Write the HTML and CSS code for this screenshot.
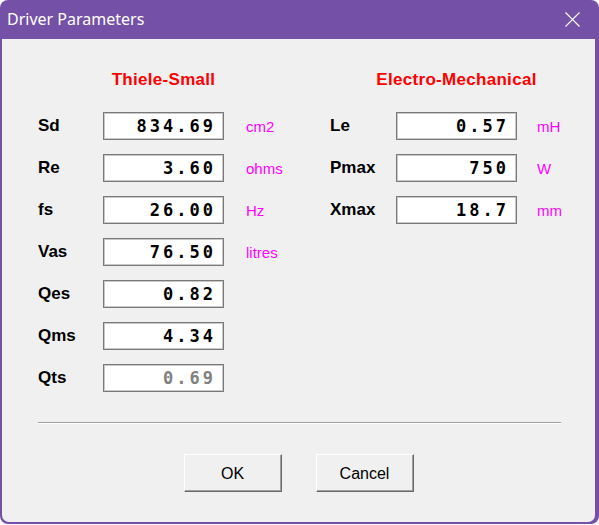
FILE: index.html
```html
<!DOCTYPE html>
<html lang="en">
<head>
    <meta charset="UTF-8">
    <title>Driver Parameters</title>
    <link rel="stylesheet" href="styles.css">
</head>
<body>

<div class="window">
    <div class="titlebar">
        <span class="title">Driver Parameters</span>
        <button class="close" aria-label="Close">
            <svg viewBox="0 0 15 15" width="15" height="15">
                <path d="M0.5 0.5L14.5 14.5M14.5 0.5L0.5 14.5" stroke="#fff" stroke-width="1.1" fill="none"/>
            </svg>
        </button>
    </div>

    <div class="client">
        <div class="columns">
            <section class="group left">
                <h2>Thiele-Small</h2>

                <span class="label">Sd</span>
                <div class="field">834.69</div>
                <span class="unit">cm2</span>

                <span class="label">Re</span>
                <div class="field">3.60</div>
                <span class="unit">ohms</span>

                <span class="label">fs</span>
                <div class="field">26.00</div>
                <span class="unit">Hz</span>

                <span class="label">Vas</span>
                <div class="field">76.50</div>
                <span class="unit">litres</span>

                <span class="label">Qes</span>
                <div class="field">0.82</div>
                <span class="unit"></span>

                <span class="label">Qms</span>
                <div class="field">4.34</div>
                <span class="unit"></span>

                <span class="label">Qts</span>
                <div class="field disabled">0.69</div>
                <span class="unit"></span>
            </section>

            <section class="group right">
                <h2>Electro-Mechanical</h2>

                <span class="label">Le</span>
                <div class="field">0.57</div>
                <span class="unit">mH</span>

                <span class="label">Pmax</span>
                <div class="field">750</div>
                <span class="unit">W</span>

                <span class="label">Xmax</span>
                <div class="field">18.7</div>
                <span class="unit">mm</span>
            </section>
        </div>

        <div class="separator"></div>

        <div class="buttons">
            <button class="btn">OK</button>
            <button class="btn">Cancel</button>
        </div>
    </div>
</div>

</body>
</html>
```

FILE: styles.css
```css
* {
    margin: 0;
    padding: 0;
    box-sizing: border-box;
}
body {
    background-color: #fff;
    font-family: "Liberation Sans", Arial, sans-serif;
    width: 599px;
    height: 525px;
    overflow: hidden;
}
.window {
    width: 599px;
    height: 524px;
    background-color: #7451a7;
    border-radius: 8px;
    display: flex;
    flex-direction: column;
    overflow: hidden;
}
.titlebar {
    height: 39px;
    display: flex;
    align-items: center;
    justify-content: space-between;
    padding: 0 19px 0 7px;
    flex-shrink: 0;
}
.title {
    color: #fff;
    font-family: "Noto Sans", "Open Sans", sans-serif;
    font-size: 16px;
    margin-top: -1px;
}
.close {
    background: none;
    border: none;
    width: 15px;
    height: 15px;
    display: flex;
}
.client {
    flex: 1;
    margin: 0 4px 2px 2px;
    background-color: #f0f0f0;
    border-radius: 0 0 7px 7px;
    padding: 31px 0 0 36px;
}
.columns {
    display: flex;
}
.group {
    display: grid;
    grid-auto-rows: 28px;
    row-gap: 14px;
    align-items: center;
}
.group.left {
    width: 292px;
    grid-template-columns: 65px 121px auto;
}
.group.right {
    grid-template-columns: 66px 121px auto;
}
.group h2 {
    grid-column: 2;
    display: flex;
    justify-content: center;
    white-space: nowrap;
    color: #f00;
    font-size: 17px;
    font-weight: bold;
    line-height: 20px;
    letter-spacing: 0.3px;
    margin-top: -9px;
}
.label {
    grid-column: 1;
    font-size: 17px;
    font-weight: bold;
    color: #000;
}
.field {
    height: 28px;
    background-color: #fff;
    border: 1px solid #7a7a7a;
    box-shadow: inset 0 0 0 1px #c8c8c8;
    font-family: "DejaVu Sans Mono", monospace;
    font-weight: bold;
    font-size: 17px;
    letter-spacing: 3px;
    text-align: right;
    line-height: 26px;
    padding-right: 7px;
    color: #000;
}
.field.disabled {
    color: #808080;
}
.unit {
    color: #f0f;
    font-size: 15px;
    padding-left: 22px;
}
.group.right .unit {
    padding-left: 20px;
}
.separator {
    margin: 30px 34px 0 0;
    height: 2px;
    border-top: 1px solid #a0a0a0;
    border-bottom: 1px solid #fff;
}
.buttons {
    display: flex;
    justify-content: center;
    gap: 34px;
    margin: 30px 36px 0 0;
}
.btn {
    width: 98px;
    height: 38px;
    background-color: #f0f0f0;
    border-top: 1px solid #fff;
    border-left: 1px solid #fff;
    border-right: 1px solid #696969;
    border-bottom: 1px solid #696969;
    box-shadow: inset -1px -1px 0 #a0a0a0;
    font-family: "Liberation Sans", Arial, sans-serif;
    font-size: 16px;
    padding-top: 2px;
    color: #000;
}
```
